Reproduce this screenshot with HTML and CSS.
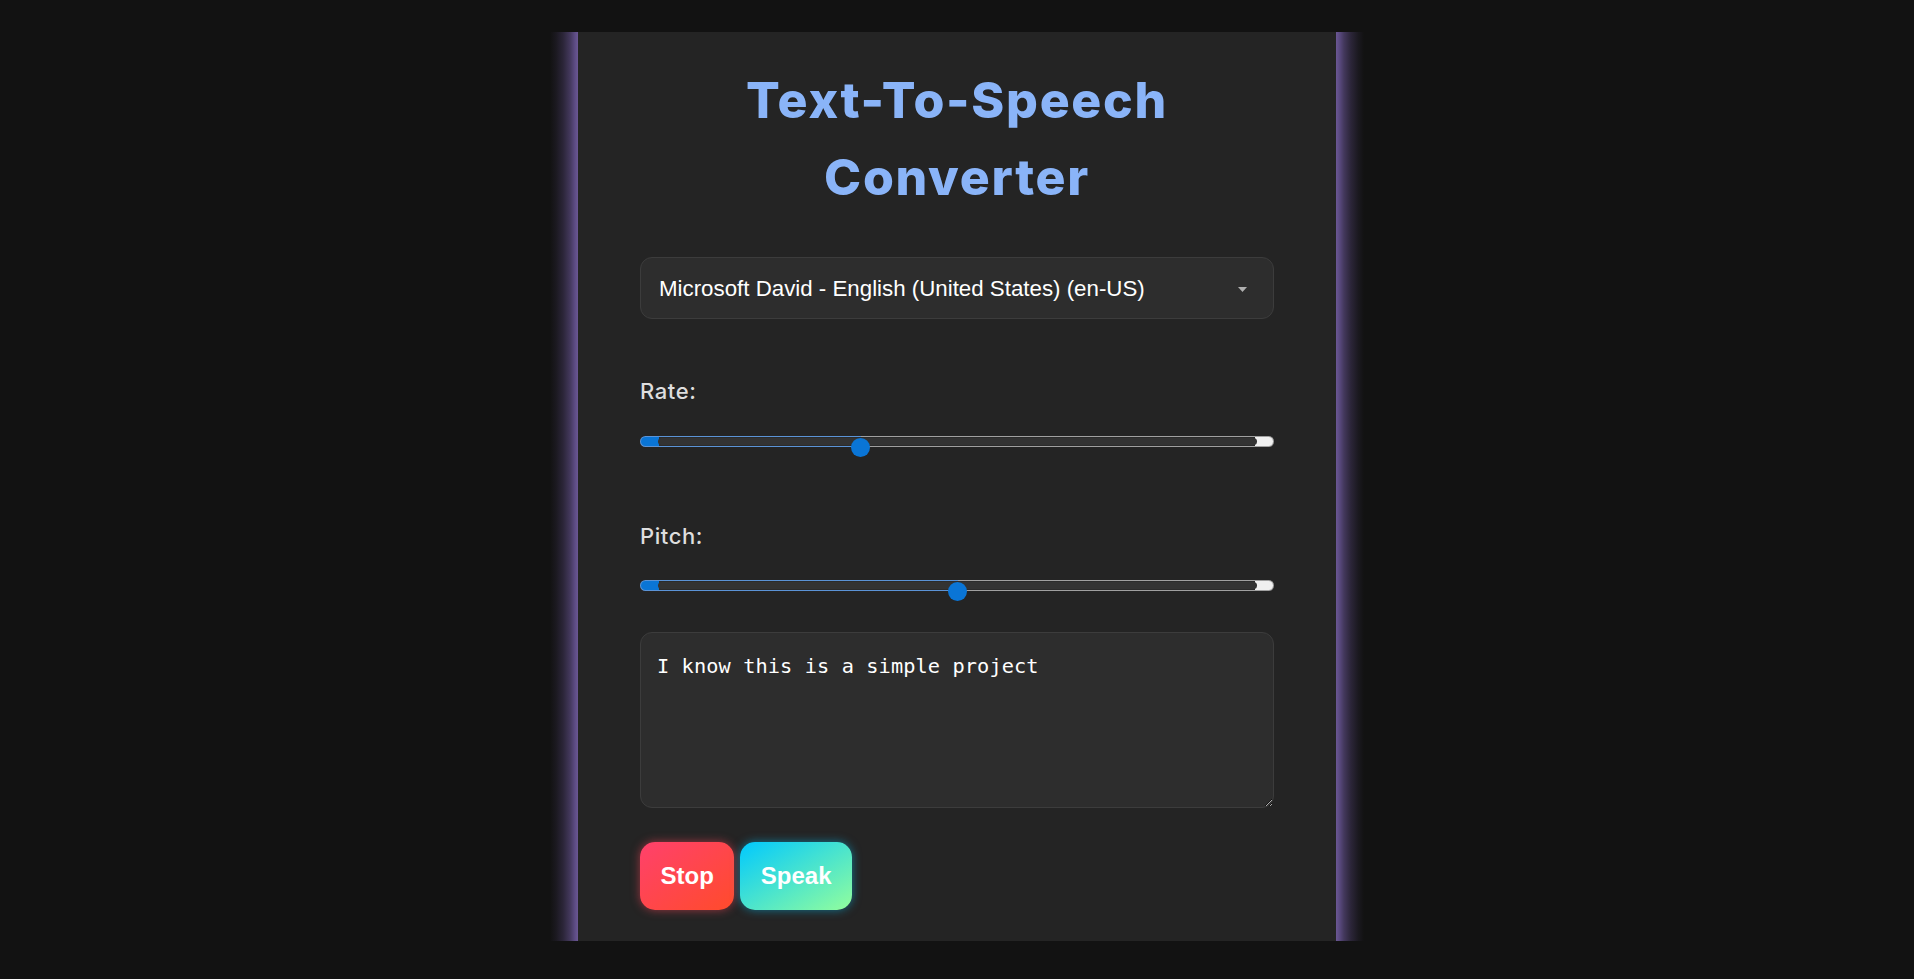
FILE: index.html
```html
<!DOCTYPE html>
<html lang="en">
<head>
<meta charset="utf-8">
<title>Text-To-Speech Converter</title>
<link rel="stylesheet" href="styles.css">
</head>
<body>
<div class="frame">
  <main class="card">
    <h1 class="title">Text-To-Speech Converter</h1>
    <div class="select-wrap">
      <select class="voice-select" aria-label="Voice">
        <option>Microsoft David - English (United States) (en-US)</option>
      </select>
      <svg class="select-arrow" width="9" height="5" viewBox="0 0 9 5" aria-hidden="true"><path d="M0 0H9L4.5 5Z" fill="#b0b0b0"/></svg>
    </div>
    <label class="field-label label-rate" for="rate">Rate:</label>
    <input class="range range-rate" id="rate" type="range" min="0.5" max="2" step="0.1" value="1" style="--fill: 34.9%">
    <label class="field-label label-pitch" for="pitch">Pitch:</label>
    <input class="range range-pitch" id="pitch" type="range" min="0" max="2" step="0.1" value="1" style="--fill: 50.1%">
    <textarea class="text-input" aria-label="Text">I know this is a simple project</textarea>
    <div class="actions">
      <button class="btn btn-stop" type="button">Stop</button>
      <button class="btn btn-speak" type="button">Speak</button>
    </div>
  </main>
</div>
</body>
</html>
```
FILE: styles.css
```css
* {
  box-sizing: border-box;
}

html,
body {
  margin: 0;
}

body {
  background: #121212;
  padding-top: 32px;
  font-family: Inter, "Noto Sans", sans-serif;
}

.frame {
  width: 814px;
  margin: 0 auto;
  padding: 0 28px;
  background:
    linear-gradient(to right, #121212 0, #1b1920 6px, #2b2538 13px, #43385c 20px, #5d4c84 25px, #6b5794 28px) left top / 28px 100% no-repeat,
    linear-gradient(to left, #121212 0, #1b1920 6px, #2b2538 13px, #43385c 20px, #5d4c84 25px, #6b5794 28px) right top / 28px 100% no-repeat;
}

.card {
  background: #242424;
  padding: 30px 62px 31px;
  display: flex;
  flex-direction: column;
}

.title {
  margin: 0;
  font-family: Inter, sans-serif;
  font-weight: 800;
  font-size: 50px;
  line-height: 77px;
  letter-spacing: 1.7px;
  color: #8ab4f8;
  text-align: center;
}

.select-wrap {
  position: relative;
  margin-top: 41px;
}

.voice-select {
  -webkit-appearance: none;
  appearance: none;
  display: block;
  width: 100%;
  height: 62px;
  margin: 0;
  padding: 0 44px 0 18px;
  background: #2d2d2d;
  border: 1px solid #3c3c3c;
  border-radius: 12px;
  color: #ffffff;
  font-family: "Liberation Sans", Arial, sans-serif;
  font-size: 22.3px;
  outline: none;
}

.select-arrow {
  position: absolute;
  right: 27px;
  top: 30px;
  pointer-events: none;
}

.field-label {
  display: block;
  font-family: Inter, sans-serif;
  font-weight: 500;
  font-size: 22px;
  line-height: 30px;
  letter-spacing: 0.6px;
  color: #dedede;
}

.label-rate {
  margin-top: 57px;
}

.label-pitch {
  margin-top: 74px;
}

.range {
  -webkit-appearance: none;
  appearance: none;
  display: block;
  width: 100%;
  height: 11px;
  margin: 30px 0 0;
  padding: 1px 16px 1px 17px;
  border: 1px solid transparent;
  border-radius: 6px;
  background:
    linear-gradient(to right, #0a75d6 0 18px, #2b2b2b 18px calc(100% - 18px), #f0f0f0 calc(100% - 18px)) padding-box,
    linear-gradient(to right, #5b93d6 var(--fill), #a0a0a0 var(--fill)) border-box;
  outline: none;
}

.range-pitch {
  margin-top: 29px;
}

.range::-webkit-slider-runnable-track {
  height: 7px;
  border-radius: 4px;
  background: #333333;
}

.range::-webkit-slider-thumb {
  -webkit-appearance: none;
  appearance: none;
  width: 19px;
  height: 19px;
  border: none;
  border-radius: 50%;
  background: #0a75d6;
}

.text-input {
  display: block;
  width: 100%;
  height: 176px;
  margin: 41px 0 0;
  padding: 21px 16px;
  background: #2d2d2d;
  border: 1px solid #3c3c3c;
  border-radius: 12px;
  color: #ffffff;
  font-family: "DejaVu Sans Mono", "Liberation Mono", monospace;
  font-size: 20.3px;
  letter-spacing: 0.1px;
  outline: none;
}

.actions {
  display: flex;
  gap: 6px;
  margin-top: 34px;
}

.btn {
  height: 68px;
  padding: 0 20.5px;
  border: none;
  border-radius: 15px;
  color: #ffffff;
  font-family: "Liberation Sans", Arial, sans-serif;
  font-weight: 700;
  font-size: 24px;
  cursor: pointer;
}

.btn-stop {
  background: linear-gradient(to bottom right, #ff416c, #ff4b2b);
  box-shadow: 0 0 10px rgba(255, 70, 90, 0.55);
}

.btn-speak {
  background: linear-gradient(to bottom right, #00c9ff, #92fe9d);
  box-shadow: 0 0 10px rgba(0, 200, 255, 0.5);
}
```
